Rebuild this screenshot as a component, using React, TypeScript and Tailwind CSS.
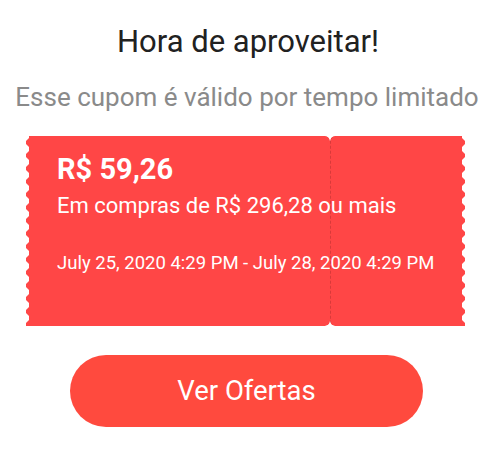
import React from 'react'

const scallopLeft =
  '[mask-image:radial-gradient(circle_at_-1.5px_50%,transparent_4.5px,black_5px)] [mask-size:100%_13px] [mask-repeat:repeat-y] [mask-position:0_6.5px]'
const scallopRight =
  '[mask-image:radial-gradient(circle_at_calc(100%+1.5px)_50%,transparent_4.5px,black_5px)] [mask-size:100%_13px] [mask-repeat:repeat-y] [mask-position:0_6.5px]'

function Coupon() {
  return (
    <div className="relative ml-[26px] w-[439px] h-[190px]">
      {/* ticket shape */}
      <div className="absolute inset-0 flex">
        <div className={`w-[304px] h-full bg-[#ff4646] rounded-tr-[5px] rounded-br-[5px] ${scallopLeft}`} />
        <div className={`flex-1 h-full bg-[#ff4646] rounded-tl-[5px] rounded-bl-[5px] border-l border-dashed border-[#d83a3a] ${scallopRight}`} />
      </div>

      {/* content */}
      <div className="relative pl-[31px] pt-[17px] text-white whitespace-nowrap">
        <div className="text-[29px] font-bold leading-[32px]">R$ 59,26</div>
        <div className="text-[22px] leading-[26px] mt-[8px]">Em compras de R$ 296,28 ou mais</div>
        <div className="text-[18.5px] leading-[22px] mt-[33px]">July 25, 2020 4:29 PM - July 28, 2020 4:29 PM</div>
      </div>
    </div>
  )
}

export default function App() {
  return (
    <div className="w-[500px] h-[469px] bg-white font-['Roboto',_'Noto_Sans',_sans-serif]">
      <div className="pt-[25px] pr-[4px] text-center text-[31px] leading-[34px] text-[#212121]">
        Hora de aproveitar!
      </div>
      <div className="mt-[23px] pr-[6px] text-center text-[26px] leading-[30px] text-[#8a8a8a] whitespace-nowrap">
        Esse cupom é válido por tempo limitado
      </div>

      <div className="mt-[24px]">
        <Coupon />
      </div>

      <div className="mt-[29px] flex">
        <button className="ml-[70px] w-[353px] h-[72px] rounded-full bg-[#ff4a3e] text-white text-[27.5px]">
          Ver Ofertas
        </button>
      </div>
    </div>
  )
}
